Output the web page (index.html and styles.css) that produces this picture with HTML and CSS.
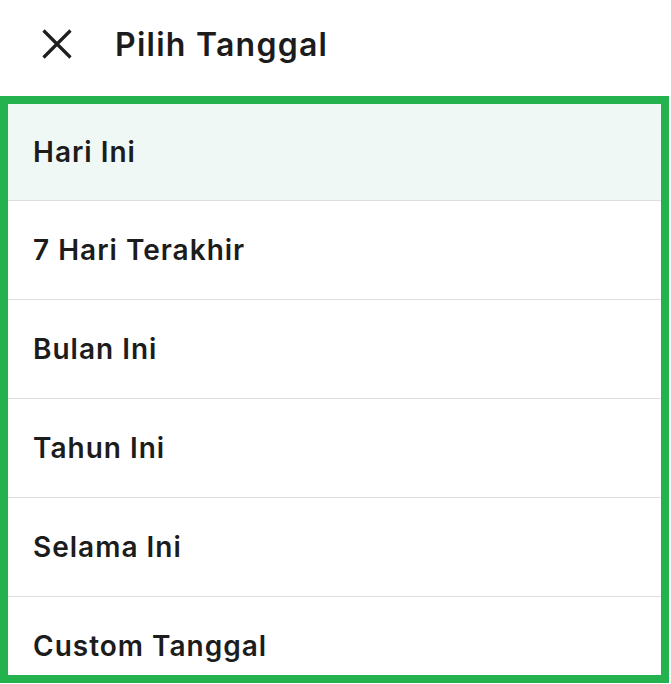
FILE: index.html
```html
<!DOCTYPE html>
<html>
<head>
<meta charset="utf-8">
<link rel="stylesheet" href="styles.css">
</head>
<body>
<header class="header">
  <button class="close" aria-label="Tutup">
    <svg width="30" height="30" viewBox="0 0 30 30"><path d="M1.5 1.5 L28.5 28.5 M28.5 1.5 L1.5 28.5" stroke="#1f1f1f" stroke-width="3.2" stroke-linecap="butt" fill="none"/></svg>
  </button>
  <h1 class="title">Pilih Tanggal</h1>
</header>
<div class="panel">
  <ul class="options">
    <li class="option active">Hari Ini</li>
    <li class="option">7 Hari Terakhir</li>
    <li class="option">Bulan Ini</li>
    <li class="option">Tahun Ini</li>
    <li class="option">Selama Ini</li>
    <li class="option">Custom Tanggal</li>
  </ul>
</div>
</body>
</html>
```
FILE: styles.css
```css
html, body {
  margin: 0;
  padding: 0;
  background: #ffffff;
  font-family: "Inter", "Noto Sans", sans-serif;
  color: #1c1c1c;
  overflow: hidden;
}
.header {
  height: 96px;
  display: flex;
  align-items: center;
  padding: 0 0 8px 42px;
  box-sizing: border-box;
}
.close {
  border: 0;
  background: none;
  padding: 0;
  width: 30px;
  height: 30px;
  display: flex;
}
.title {
  margin: 0 0 0 43px;
  font-size: 32px;
  font-weight: 600;
  letter-spacing: 1.25px;
}
.panel {
  width: 669px;
  height: 587px;
  border: 8px solid #23b24e;
  box-sizing: border-box;
  overflow: hidden;
}
.options {
  list-style: none;
  margin: 0;
  padding: 0;
}
.option {
  height: 98px;
  border-bottom: 1px solid #dedede;
  display: flex;
  align-items: center;
  padding-left: 25px;
  font-size: 28px;
  font-weight: 600;
  letter-spacing: 1px;
}
.option.active {
  height: 96px;
  background: #eff8f5;
}
```
